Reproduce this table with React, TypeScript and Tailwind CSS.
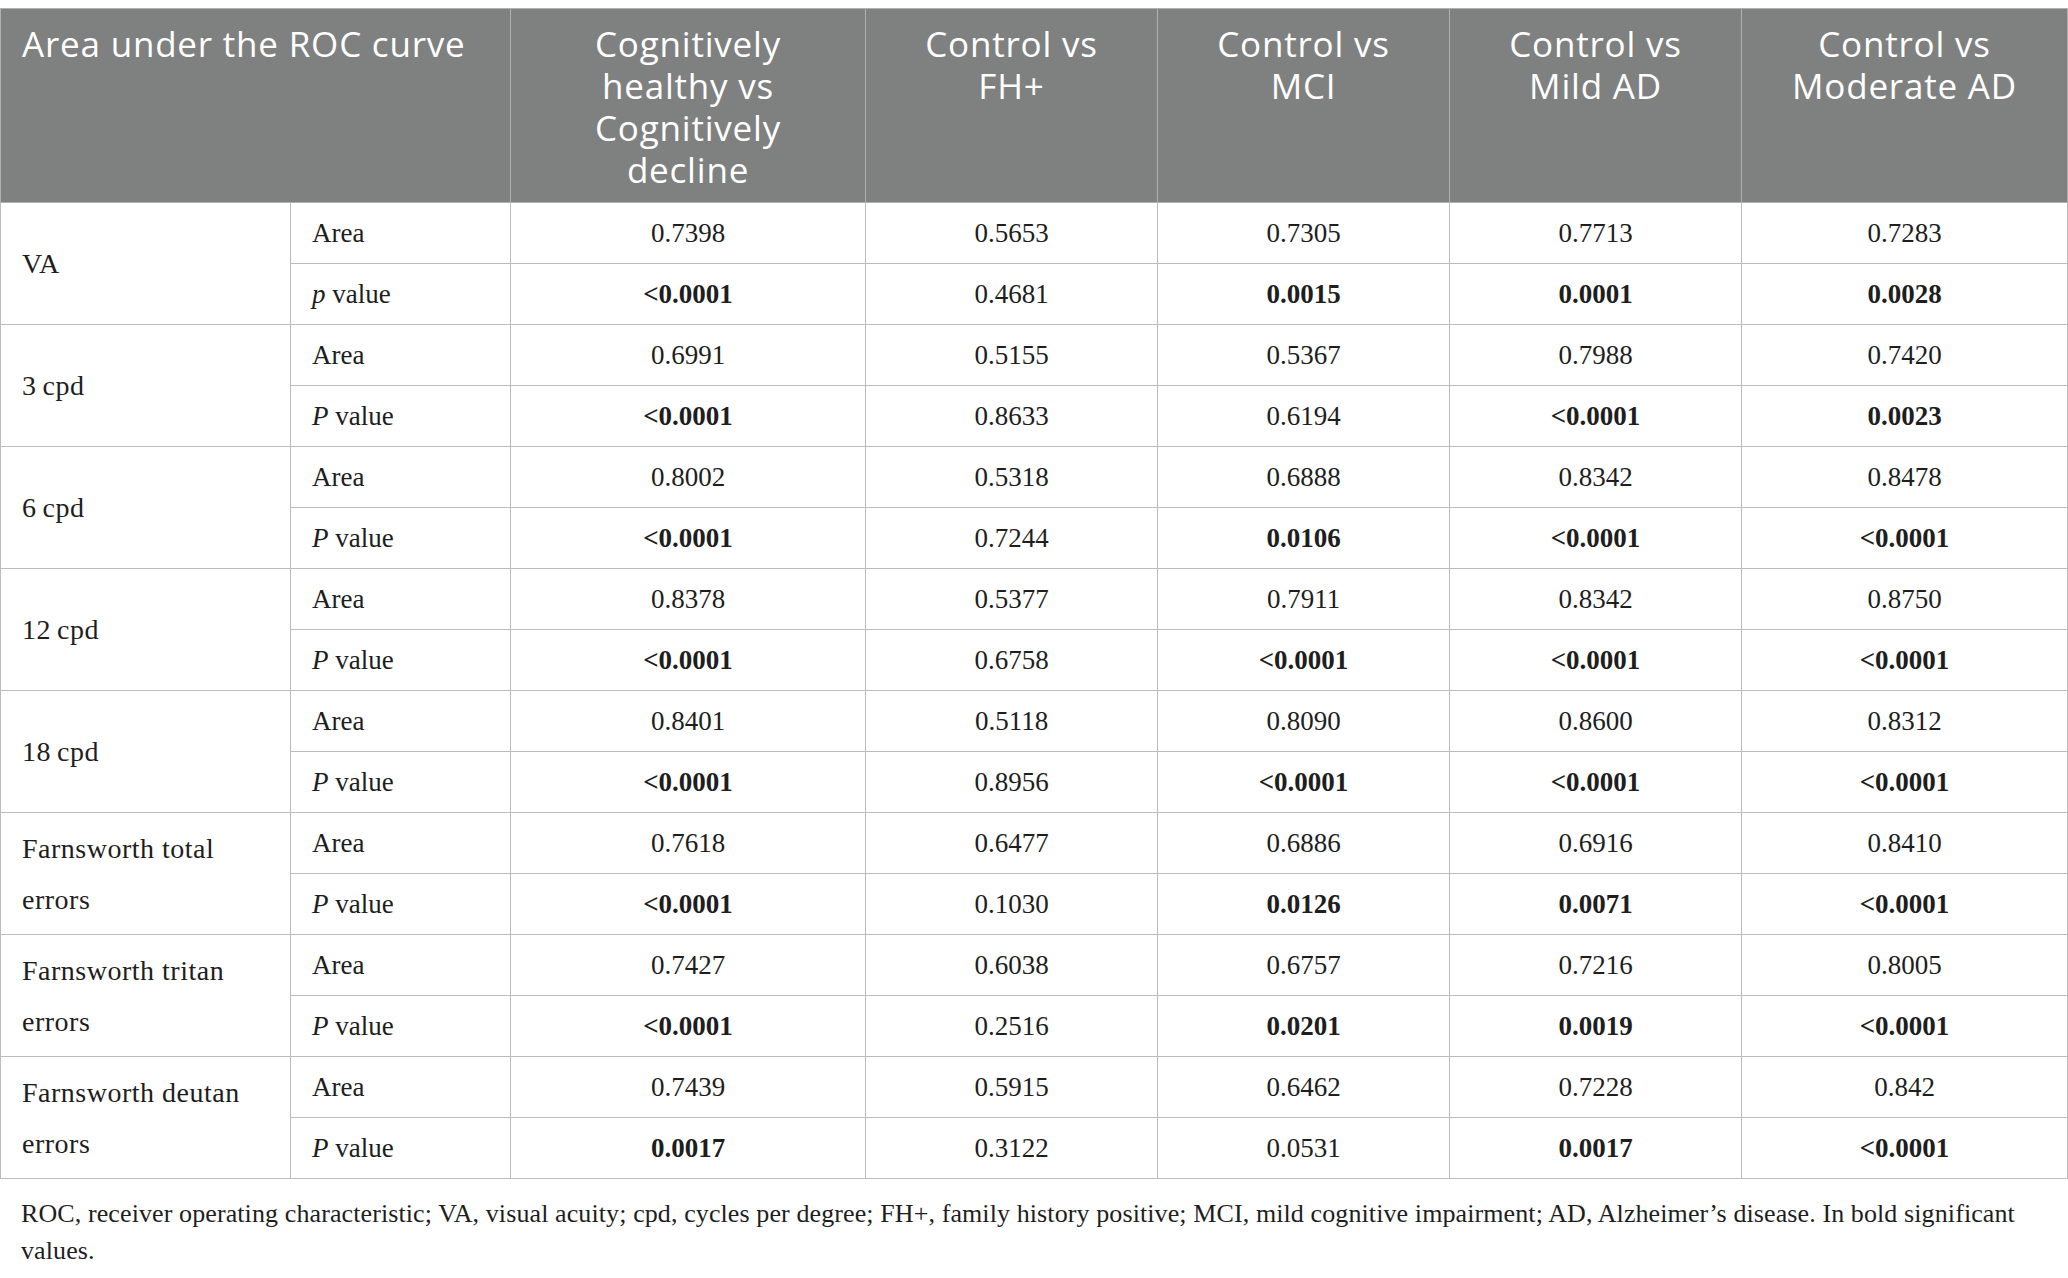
const headers: string[][] = [
  ['Cognitively', 'healthy vs', 'Cognitively', 'decline'],
  ['Control vs', 'FH+'],
  ['Control vs', 'MCI'],
  ['Control vs', 'Mild AD'],
  ['Control vs', 'Moderate AD'],
];

type Val = { v: string; b?: boolean };

type Group = {
  label: string;
  lowerP?: boolean;
  area: string[];
  p: Val[];
};

const groups: Group[] = [
  {
    label: 'VA',
    lowerP: true,
    area: ['0.7398', '0.5653', '0.7305', '0.7713', '0.7283'],
    p: [{ v: '<0.0001', b: true }, { v: '0.4681' }, { v: '0.0015', b: true }, { v: '0.0001', b: true }, { v: '0.0028', b: true }],
  },
  {
    label: '3\u2009cpd',
    area: ['0.6991', '0.5155', '0.5367', '0.7988', '0.7420'],
    p: [{ v: '<0.0001', b: true }, { v: '0.8633' }, { v: '0.6194' }, { v: '<0.0001', b: true }, { v: '0.0023', b: true }],
  },
  {
    label: '6\u2009cpd',
    area: ['0.8002', '0.5318', '0.6888', '0.8342', '0.8478'],
    p: [{ v: '<0.0001', b: true }, { v: '0.7244' }, { v: '0.0106', b: true }, { v: '<0.0001', b: true }, { v: '<0.0001', b: true }],
  },
  {
    label: '12\u2009cpd',
    area: ['0.8378', '0.5377', '0.7911', '0.8342', '0.8750'],
    p: [{ v: '<0.0001', b: true }, { v: '0.6758' }, { v: '<0.0001', b: true }, { v: '<0.0001', b: true }, { v: '<0.0001', b: true }],
  },
  {
    label: '18\u2009cpd',
    area: ['0.8401', '0.5118', '0.8090', '0.8600', '0.8312'],
    p: [{ v: '<0.0001', b: true }, { v: '0.8956' }, { v: '<0.0001', b: true }, { v: '<0.0001', b: true }, { v: '<0.0001', b: true }],
  },
  {
    label: 'Farnsworth total errors',
    area: ['0.7618', '0.6477', '0.6886', '0.6916', '0.8410'],
    p: [{ v: '<0.0001', b: true }, { v: '0.1030' }, { v: '0.0126', b: true }, { v: '0.0071', b: true }, { v: '<0.0001', b: true }],
  },
  {
    label: 'Farnsworth tritan errors',
    area: ['0.7427', '0.6038', '0.6757', '0.7216', '0.8005'],
    p: [{ v: '<0.0001', b: true }, { v: '0.2516' }, { v: '0.0201', b: true }, { v: '0.0019', b: true }, { v: '<0.0001', b: true }],
  },
  {
    label: 'Farnsworth deutan errors',
    area: ['0.7439', '0.5915', '0.6462', '0.7228', '0.842'],
    p: [{ v: '0.0017', b: true }, { v: '0.3122' }, { v: '0.0531' }, { v: '0.0017', b: true }, { v: '<0.0001', b: true }],
  },
];

const cell = 'border border-[#bcbcbc] h-[61px] p-0 align-middle';
const head = 'border border-[#b0b0b0] pt-[14px] align-top text-[35px] font-normal leading-[42px] tracking-[0.8px]';

export default function App() {
  return (
    <div className="w-[2068px] bg-white pt-[8px] text-[#1e1e1e]" style={{ fontFamily: '"Liberation Serif", "Times New Roman", serif' }}>
      <table className="w-full table-fixed border-collapse">
        <colgroup>
          <col className="w-[290px]" />
          <col className="w-[220px]" />
          <col className="w-[355px]" />
          <col className="w-[292px]" />
          <col className="w-[292px]" />
          <col className="w-[292px]" />
          <col />
        </colgroup>
        <thead>
          <tr className="h-[194px] bg-[#7f8180] text-white" style={{ fontFamily: '"Open Sans", sans-serif' }}>
            <th colSpan={2} className={`${head} pl-[21px] text-left`}>
              Area under the ROC curve
            </th>
            {headers.map((h) => (
              <th key={h.join(' ')} className={`${head} px-[8px] text-center`}>
                {h.map((line, i) => (
                  <span key={line + i}>
                    {i > 0 && <br />}
                    {line}
                  </span>
                ))}
              </th>
            ))}
          </tr>
        </thead>
        <tbody className="text-[27px]">
          {groups.map((g) => (
            <>
              <tr key={g.label + 'a'}>
                <td rowSpan={2} className={`${cell} pl-[21px] pr-[30px] text-[28px] leading-[51px] tracking-[0.5px]`}>
                  {g.label}
                </td>
                <td className={`${cell} pl-[21px]`}>Area</td>
                {g.area.map((a, i) => (
                  <td key={i} className={`${cell} text-center`}>
                    {a}
                  </td>
                ))}
              </tr>
              <tr key={g.label + 'p'}>
                <td className={`${cell} pl-[21px]`}>
                  <i>{g.lowerP ? 'p' : 'P'}</i> value
                </td>
                {g.p.map((p, i) => (
                  <td key={i} className={`${cell} text-center ${p.b ? 'font-bold' : ''}`}>
                    {p.v}
                  </td>
                ))}
              </tr>
            </>
          ))}
        </tbody>
      </table>
      <p className="px-[21px] pt-[16px] text-[26px] leading-[37px] tracking-[0.1px]">
        ROC, receiver operating characteristic; VA, visual acuity; cpd, cycles per degree; FH+, family history positive; MCI, mild
        cognitive impairment; AD, Alzheimer’s disease. In bold significant
        <br />
        values.
      </p>
    </div>
  );
}
